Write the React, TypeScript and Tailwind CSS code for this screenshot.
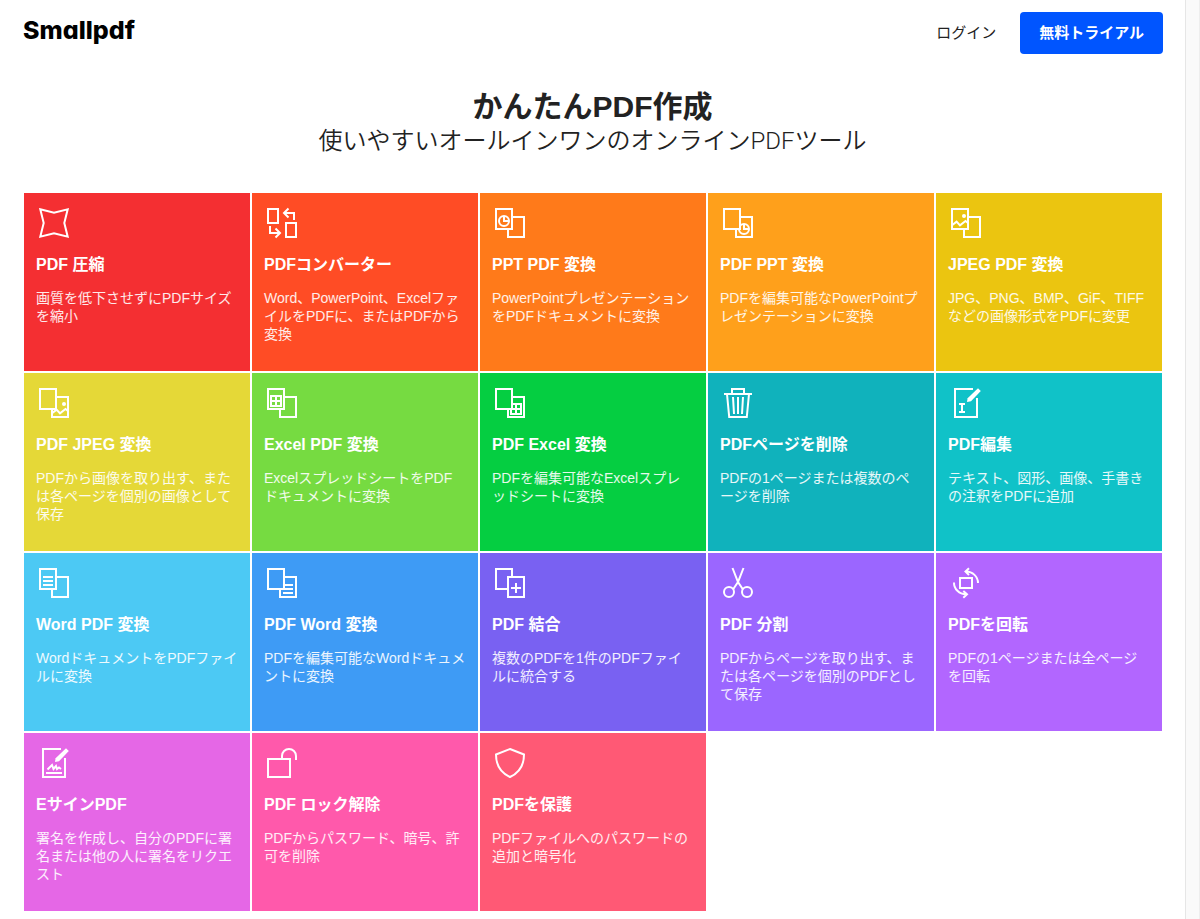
import type { ReactNode } from "react";
import clsx from "clsx";

// Two overlapping pages, the page in front hides what lies behind it
const Pages = ({ front, back }: { front?: ReactNode; back?: ReactNode }) => (
  <>
    <path d="M16 12h16v20H16z" />
    {back && <g transform="translate(12 8)">{back}</g>}
    <path d="M4 4h16v20H4z" fill="currentColor" />
    {front}
  </>
);

const Chart = () => (
  <>
    <circle cx="12" cy="16" r="5" />
    <path d="M12 11v5h5" />
  </>
);

const Photo = () => (
  <>
    <circle cx="16" cy="11" r="2" fill="white" stroke="none" />
    <path d="M4 20.3 8.6 16.6 12 20.4 17.5 16 20 18" />
  </>
);

const Sheet = () => <path d="M7 11h10v10H7zM12 11v10M7 16h10" />;

const Lines = () => <path d="M7 12h10M7 16h10M7 20h10" />;

const Note = ({ children }: { children: ReactNode }) => (
  <>
    <path d="M25 4H7v28h22V13" />
    <path d="M30 3.2 32.8 6 23 16.2 19 17l.6-3.8z" fill="white" stroke="none" />
    {children}
  </>
);

const tools = [
  {
    title: "PDF 圧縮",
    text: "画質を低下させずにPDFサイズを縮小",
    color: "text-[#f42f32]",
    icon: <path d="M4.3 4.3 18 7.7 31.7 4.3 28.3 18 31.7 31.7 18 28.3 4.3 31.7 7.7 18z" />,
  },
  {
    title: "PDFコンバーター",
    text: "Word、PowerPoint、ExcelファイルをPDFに、またはPDFから変換",
    color: "text-[#ff4c25]",
    icon: (
      <path d="M4 4h10v14H4zM22 18h10v14H22zM30 15V8H20M24.5 3.5 20 8l4.5 4.5M6 21v7h10M11.5 23.5 16 28l-4.5 4.5" />
    ),
  },
  {
    title: "PPT PDF 変換",
    text: "PowerPointプレゼンテーションをPDFドキュメントに変換",
    color: "text-[#ff7a1a]",
    icon: <Pages front={<Chart />} />,
  },
  {
    title: "PDF PPT 変換",
    text: "PDFを編集可能なPowerPointプレゼンテーションに変換",
    color: "text-[#ffa01b]",
    icon: <Pages back={<Chart />} />,
  },
  {
    title: "JPEG PDF 変換",
    text: "JPG、PNG、BMP、GiF、TIFFなどの画像形式をPDFに変更",
    color: "text-[#ebc510]",
    icon: <Pages front={<Photo />} />,
  },
  {
    title: "PDF JPEG 変換",
    text: "PDFから画像を取り出す、または各ページを個別の画像として保存",
    color: "text-[#e5d837]",
    icon: <Pages back={<Photo />} />,
  },
  {
    title: "Excel PDF 変換",
    text: "ExcelスプレッドシートをPDFドキュメントに変換",
    color: "text-[#76db41]",
    icon: <Pages front={<Sheet />} />,
  },
  {
    title: "PDF Excel 変換",
    text: "PDFを編集可能なExcelスプレッドシートに変換",
    color: "text-[#05ce41]",
    icon: <Pages back={<Sheet />} />,
  },
  {
    title: "PDFページを削除",
    text: "PDFの1ページまたは複数のページを削除",
    color: "text-[#10b2bc]",
    icon: (
      <path d="M4 9h28M12 9V4h12v5M7 9l2.2 23h17.6L29 9M13 12l1 17M18 12v17M23 12l-1 17" />
    ),
  },
  {
    title: "PDF編集",
    text: "テキスト、図形、画像、手書きの注釈をPDFに追加",
    color: "text-[#10c2c8]",
    icon: (
      <Note>
        <path d="M11 19h6M14 19v8M11 27h6" />
      </Note>
    ),
  },
  {
    title: "Word PDF 変換",
    text: "WordドキュメントをPDFファイルに変換",
    color: "text-[#4cc9f4]",
    icon: <Pages front={<Lines />} />,
  },
  {
    title: "PDF Word 変換",
    text: "PDFを編集可能なWordドキュメントに変換",
    color: "text-[#3e9bf5]",
    icon: <Pages back={<Lines />} />,
  },
  {
    title: "PDF 結合",
    text: "複数のPDFを1件のPDFファイルに統合する",
    color: "text-[#7961f2]",
    icon: <path d="M16 24H4V4h16v8M16 12h16v20H16zM19 23h10M24 18v10" />,
  },
  {
    title: "PDF 分割",
    text: "PDFからページを取り出す、または各ページを個別のPDFとして保存",
    color: "text-[#9b66ff]",
    icon: (
      <>
        <circle cx="9" cy="27" r="5" />
        <circle cx="27" cy="27" r="5" />
        <path d="M12.5 3 18 17 23 24.5M23.5 3 18 17 13 24.5" />
      </>
    ),
  },
  {
    title: "PDFを回転",
    text: "PDFの1ページまたは全ページを回転",
    color: "text-[#b266ff]",
    icon: (
      <path d="M12 13h12v10H12zM30 18A12 11.5 0 0 0 18 6.5M21 3.3 17.5 6.6 21 10M6 17.5A12 11.5 0 0 0 18 29.3M15.3 26 19 29.3 15.3 32.7" />
    ),
  },
  {
    title: "EサインPDF",
    text: "署名を作成し、自分のPDFに署名または他の人に署名をリクエスト",
    color: "text-[#e567e6]",
    icon: (
      <Note>
        <path d="M10 28h16M11.5 24.5 16 20l1.5 4 2.5-3 1 3 2-1.5 2 1.5" />
      </Note>
    ),
  },
  {
    title: "PDF ロック解除",
    text: "PDFからパスワード、暗号、許可を削除",
    color: "text-[#ff59ab]",
    icon: <path d="M4 14h22v18H4zM18 14v-3a7 7 0 0 1 14 0v4" />,
  },
  {
    title: "PDFを保護",
    text: "PDFファイルへのパスワードの追加と暗号化",
    color: "text-[#ff5975]",
    icon: <path d="M18 4 32 9.5C32 20 28 27.5 18 32 8 27.5 4 20 4 9.5z" />,
  },
];

const Header = () => (
  <header className="flex items-start justify-between pt-3 pl-[23px] pr-[22px]">
    <a
      href="#"
      className="font-[Inter,sans-serif] text-[25px] leading-9 font-extrabold text-black [font-feature-settings:'cv11']"
    >
      Smallpdf
    </a>
    <nav className="flex items-center gap-6 text-[15px]">
      <a href="#login" className="hover:underline">
        ログイン
      </a>
      <button className="h-[42px] px-[19px] rounded bg-[#0055ff] hover:bg-[#0048d9] font-bold text-white">
        無料トライアル
      </button>
    </nav>
  </header>
);

const ToolGrid = () => (
  <section className="grid grid-cols-2 md:grid-cols-5 auto-rows-[minmax(178px,auto)] gap-[2px] pl-6 pr-[23px]">
    {tools.map((tool) => (
      <a key={tool.title} href="#" className={clsx("block bg-current p-3", tool.color)}>
        <svg
          viewBox="0 0 36 36"
          className="size-9"
          fill="none"
          stroke="white"
          strokeWidth="2"
          aria-hidden="true"
        >
          {tool.icon}
        </svg>
        <h2 className="mt-3 text-base leading-6 font-bold text-white">{tool.title}</h2>
        <p className="mt-3 text-sm leading-[18px] text-white/90">{tool.text}</p>
      </a>
    ))}
  </section>
);

const App = () => {
  return (
    <div
      lang="ja"
      className="flex min-h-screen bg-white font-['Liberation_Sans','Noto_Sans_CJK_JP',sans-serif] text-[#222222]"
    >
      <main className="flex-1 min-w-0">
        <Header />
        <div className="pt-[35px] pb-9 text-center">
          <h1 className="text-3xl leading-9 font-bold">かんたんPDF作成</h1>
          <p className="font-[Roboto,'Noto_Sans_CJK_JP',sans-serif] text-2xl leading-8 font-[350]">
            使いやすいオールインワンのオンラインPDFツール
          </p>
        </div>
        <ToolGrid />
      </main>
      <div className="w-[15px] shrink-0 border-l border-r border-l-[#e6e6e6] border-r-[#eeeeee] bg-[#fafafa]" />
    </div>
  );
};

export default App;
